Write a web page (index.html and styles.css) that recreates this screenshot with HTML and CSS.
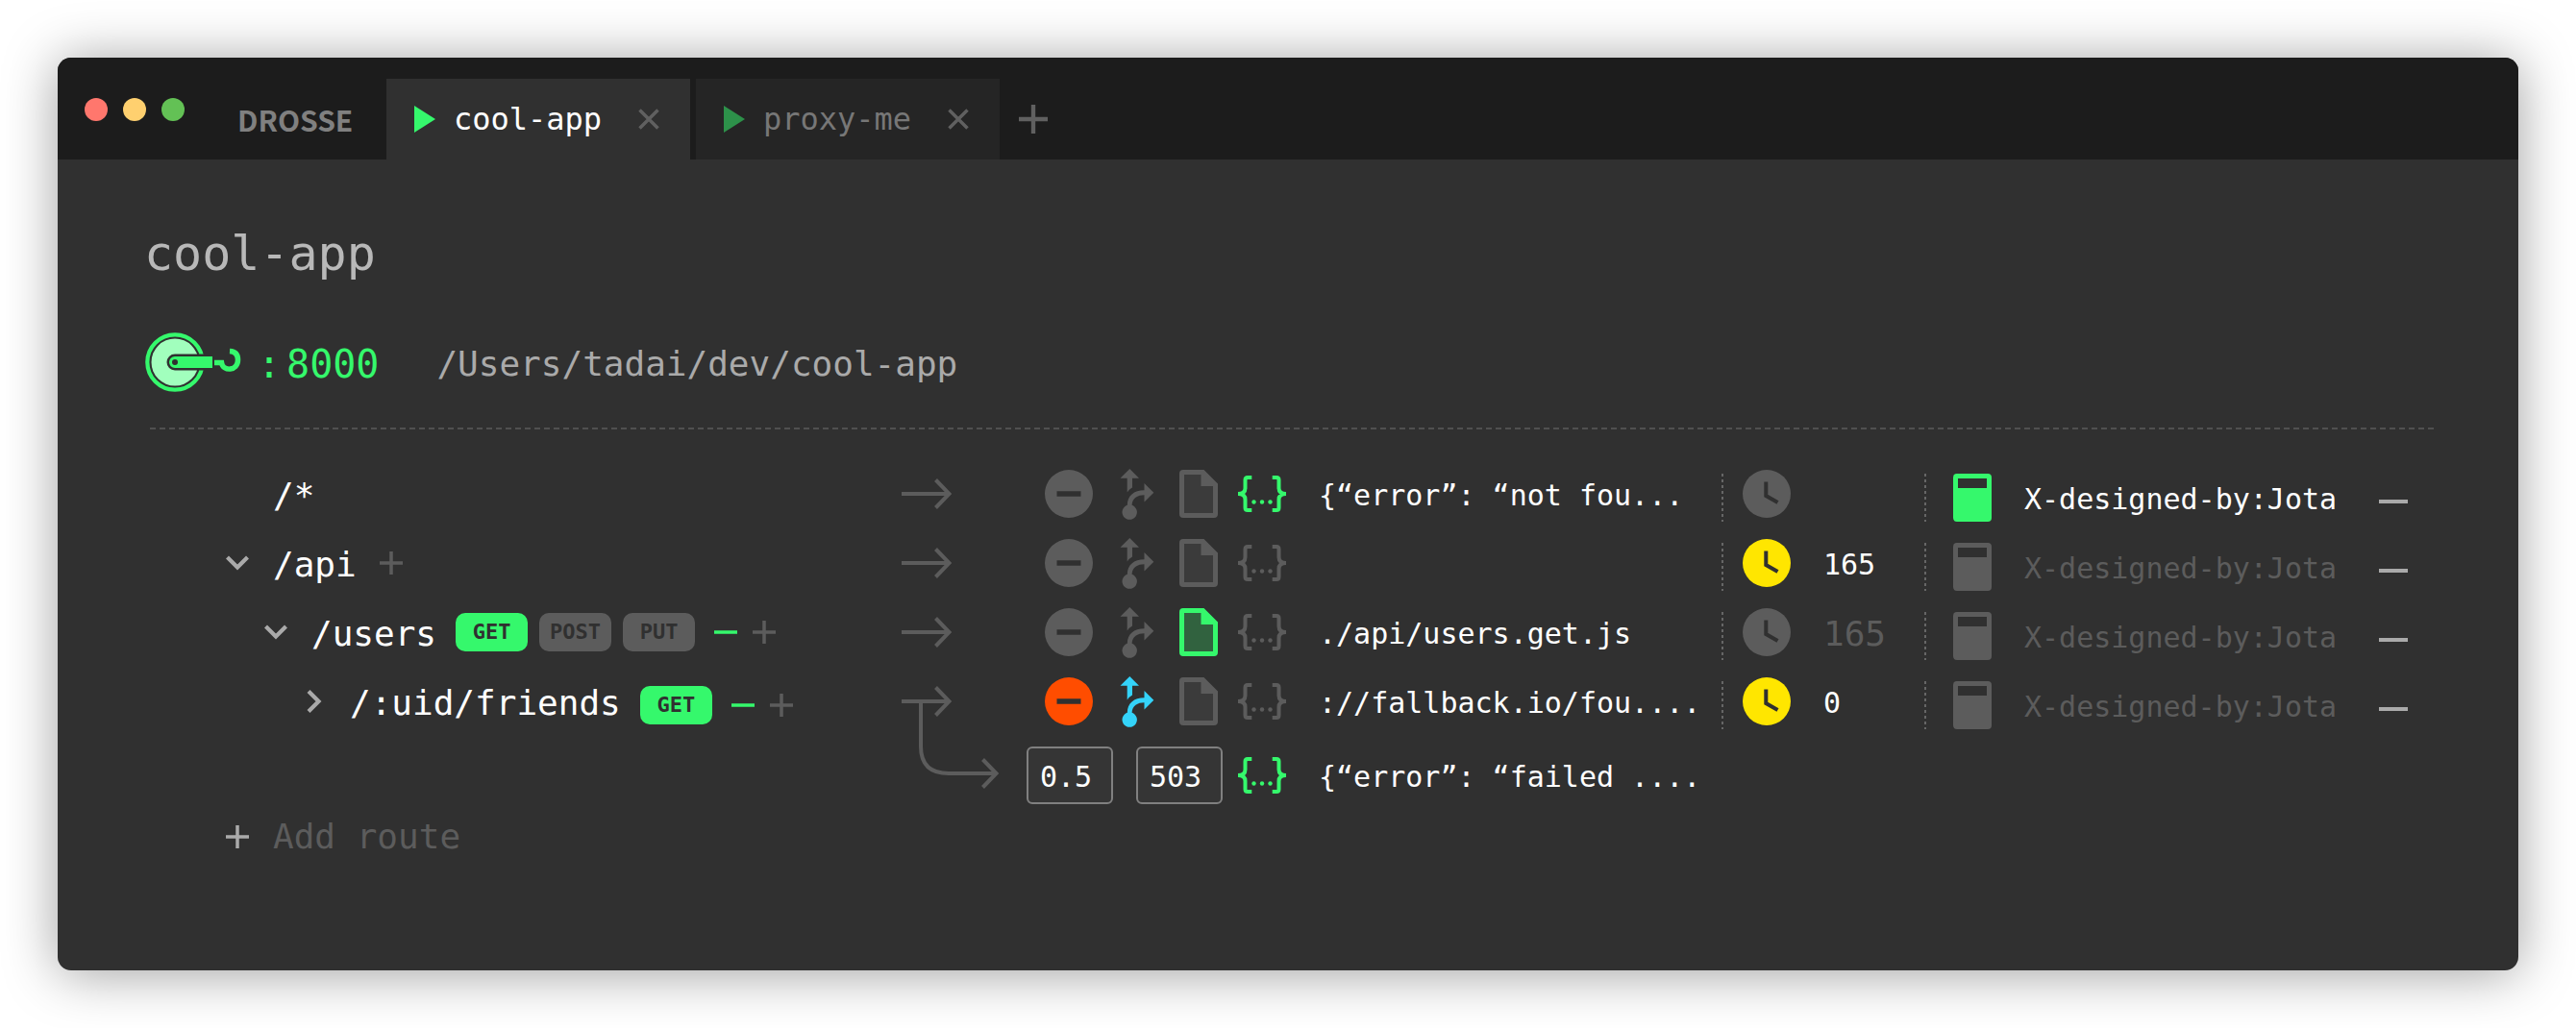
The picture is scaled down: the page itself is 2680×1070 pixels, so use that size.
FILE: index.html
```html
<!DOCTYPE html>
<html lang="en">
<head>
<meta charset="utf-8">
<title>Drosse</title>
<link rel="stylesheet" href="styles.css">
</head>
<body>
<svg class="sprite" aria-hidden="true">
  <symbol id="play" viewBox="0 0 22 28"><path d="M0 0L22 14L0 28Z"/></symbol>
  <symbol id="close" viewBox="0 0 22 22"><path d="M1.500 1.500L20.500 20.500M20.500 1.500L1.500 20.500" fill="none" stroke="currentColor" stroke-width="3.500"/></symbol>
  <symbol id="plus" viewBox="0 0 24 24"><path d="M12 0V24M0 12H24" fill="none" stroke="currentColor" stroke-width="3.500"/></symbol>
  <symbol id="minus" viewBox="0 0 24 24"><path d="M0 12H24" fill="none" stroke="currentColor" stroke-width="3.500"/></symbol>
  <symbol id="chevron" viewBox="0 0 24 24"><path d="M1.500 6L12 16.500L22.500 6" fill="none" stroke="currentColor" stroke-width="4.200"/></symbol>
  <symbol id="arrow" viewBox="0 0 52 32"><path d="M0 16H49M35.500 1.500L49.500 16L35.500 30.500" fill="none" stroke="currentColor" stroke-width="4"/></symbol>
  <symbol id="elbow" viewBox="0 0 102 96"><path d="M20 4V49Q20 77 49 77H98M84.500 62.500L98.500 77L84.500 91.500" fill="none" stroke="currentColor" stroke-width="4"/></symbol>
  <symbol id="block" viewBox="0 0 50 50"><path fill-rule="evenodd" d="M25 0A25 25 0 0 1 25 50A25 25 0 0 1 25 0ZM12.500 22.300V27.700H37.500V22.300Z"/></symbol>
  <symbol id="proxy" viewBox="0 0 36 54"><path d="M10.300 1L20 10.800H13V20.500Q9.500 22.500 7.700 25.500V10.800H.5Z"/><path d="M25.500 16L35.300 25.800L25.500 35.500V28.300C18.500 28.300 13 31.500 12.600 38.800A7.700 7.700 0 1 1 7.800 38.800C8 29 14.500 23.200 25.500 23.200Z"/></symbol>
  <symbol id="file" viewBox="0 0 40 50"><path d="M4 4H24V16H36V46H4Z" opacity=".25"/><path fill-rule="evenodd" d="M4 0H25.500L40 14.500V46A4 4 0 0 1 36 50H4A4 4 0 0 1 0 46V4A4 4 0 0 1 4 0ZM5 5V45H35V17H22.500V5Z"/></symbol>
  <symbol id="braces" viewBox="0 0 52 40"><path d="M15.300 3H11Q8.500 3 8.500 5.500V14Q8.500 20 1 20Q8.500 20 8.500 26V34.500Q8.500 37 11 37H15.300M36.700 3H41Q43.500 3 43.500 5.500V14Q43.500 20 51 20Q43.500 20 43.500 26V34.500Q43.500 37 41 37H36.700" fill="none" stroke="currentColor" stroke-width="4"/><path d="M1 18H5.500L8 20L5.500 22H1ZM51 18H46.500L44 20L46.500 22H51Z"/><circle cx="17.500" cy="28.500" r="2.200"/><circle cx="26" cy="28.500" r="2.200"/><circle cx="34.500" cy="28.500" r="2.200"/></symbol>
  <symbol id="clock" viewBox="0 0 50 50"><circle cx="25" cy="25" r="25"/><path d="M24.300 12.500V27L36.500 34" fill="none" stroke="#303030" stroke-width="4"/></symbol>
  <symbol id="header" viewBox="0 0 40 50"><path fill-rule="evenodd" d="M4 0H36A4 4 0 0 1 40 4V46A4 4 0 0 1 36 50H4A4 4 0 0 1 0 46V4A4 4 0 0 1 4 0ZM5 5V15H35V5Z"/></symbol>
  <symbol id="reel" viewBox="0 0 100 62">
    <circle cx="31" cy="31" r="28.700" fill="none" stroke="currentColor" stroke-width="4.200"/>
    <circle cx="31" cy="31" r="24.500" fill="#a1ffbd"/>
    <path d="M31 22.500H64V39.500H31A8.500 8.500 0 0 1 31 22.500Z" fill="#303030"/>
    <path fill-rule="evenodd" d="M31 25H70V37H31A6 6 0 0 1 31 25ZM31 28A3 3 0 0 0 31 34A3 3 0 0 0 31 28Z"/>
    <path d="M72 31.500H79.500C81 41 96.500 40.500 96.500 28.500Q96.500 20 88 19.500" fill="none" stroke="currentColor" stroke-width="5.500"/>
  </symbol>
</svg>

<main class="window">
  <header class="titlebar">
    <div class="lights"><button class="light red" aria-label="Close window"></button><button class="light amber" aria-label="Minimise"></button><button class="light green" aria-label="Zoom"></button></div>
    <div class="brand">DROSSE</div>
    <nav class="tabs">
      <div class="tab active"><svg class="play"><use href="#play"/></svg><a href="#cool-app">cool-app</a><button class="tab-close" aria-label="Close cool-app"><svg><use href="#close"/></svg></button></div>
      <div class="tab"><svg class="play"><use href="#play"/></svg><a href="#proxy-me">proxy-me</a><button class="tab-close" aria-label="Close proxy-me"><svg><use href="#close"/></svg></button></div>
    </nav>
    <button class="tab-add" aria-label="New tab"><svg><use href="#plus"/></svg></button>
  </header>

  <section class="content" id="cool-app">
    <h1>cool-app</h1>
    <div class="server">
      <svg class="reel"><use href="#reel"/></svg>
      <div class="port"><span>:</span><span>8000</span></div>
      <div class="folder">/Users/tadai/dev/cool-app</div>
    </div>

    <div class="routes">
      <div class="route">
        <div class="path"><span class="toggle"></span><span class="name">/*</span></div>
        <svg class="arrow"><use href="#arrow"/></svg>
        <div class="kinds">
          <button aria-label="Throttle"><svg class="i-block"><use href="#block"/></svg></button>
          <button aria-label="Proxy"><svg class="i-proxy"><use href="#proxy"/></svg></button>
          <button aria-label="File"><svg class="i-file"><use href="#file"/></svg></button>
          <button class="on" aria-label="Inline body"><svg class="i-braces"><use href="#braces"/></svg></button>
        </div>
        <div class="value">{“error”: “not fou...</div>
        <div class="delay"><i class="rule"></i><button aria-label="Delay"><svg class="i-clock"><use href="#clock"/></svg></button></div>
        <div class="head active"><i class="rule"></i><button aria-label="Headers"><svg class="i-header"><use href="#header"/></svg></button><span class="head-text">X-designed-by:Jota</span><button class="remove" aria-label="Remove header"></button></div>
      </div>

      <div class="route">
        <div class="path"><button class="toggle" aria-label="Collapse"><svg><use href="#chevron"/></svg></button><span class="name">/api</span><button class="add" aria-label="Add child"><svg><use href="#plus"/></svg></button></div>
        <svg class="arrow"><use href="#arrow"/></svg>
        <div class="kinds">
          <button aria-label="Throttle"><svg class="i-block"><use href="#block"/></svg></button>
          <button aria-label="Proxy"><svg class="i-proxy"><use href="#proxy"/></svg></button>
          <button aria-label="File"><svg class="i-file"><use href="#file"/></svg></button>
          <button aria-label="Inline body"><svg class="i-braces"><use href="#braces"/></svg></button>
        </div>
        <div class="value"></div>
        <div class="delay"><i class="rule"></i><button class="yellow" aria-label="Delay"><svg class="i-clock"><use href="#clock"/></svg></button><span class="ms">165</span></div>
        <div class="head"><i class="rule"></i><button aria-label="Headers"><svg class="i-header"><use href="#header"/></svg></button><span class="head-text">X-designed-by:Jota</span><button class="remove" aria-label="Remove header"></button></div>
      </div>

      <div class="route">
        <div class="path level-1"><button class="toggle" aria-label="Collapse"><svg><use href="#chevron"/></svg></button><span class="name">/users</span>
          <div class="verbs"><button class="verb on">GET</button><button class="verb">POST</button><button class="verb">PUT</button></div>
          <div class="edit"><button class="on" aria-label="Remove verb"><svg><use href="#minus"/></svg></button><button aria-label="Add verb"><svg><use href="#plus"/></svg></button></div></div>
        <svg class="arrow"><use href="#arrow"/></svg>
        <div class="kinds">
          <button aria-label="Throttle"><svg class="i-block"><use href="#block"/></svg></button>
          <button aria-label="Proxy"><svg class="i-proxy"><use href="#proxy"/></svg></button>
          <button class="on" aria-label="File"><svg class="i-file"><use href="#file"/></svg></button>
          <button aria-label="Inline body"><svg class="i-braces"><use href="#braces"/></svg></button>
        </div>
        <div class="value">./api/users.get.js</div>
        <div class="delay"><i class="rule"></i><button aria-label="Delay"><svg class="i-clock"><use href="#clock"/></svg></button><span class="ms off">165</span></div>
        <div class="head"><i class="rule"></i><button aria-label="Headers"><svg class="i-header"><use href="#header"/></svg></button><span class="head-text">X-designed-by:Jota</span><button class="remove" aria-label="Remove header"></button></div>
      </div>

      <div class="route">
        <div class="path level-2"><button class="toggle closed" aria-label="Expand"><svg><use href="#chevron"/></svg></button><span class="name">/:uid/friends</span>
          <div class="verbs"><button class="verb on">GET</button></div>
          <div class="edit"><button class="on" aria-label="Remove verb"><svg><use href="#minus"/></svg></button><button aria-label="Add verb"><svg><use href="#plus"/></svg></button></div></div>
        <svg class="arrow"><use href="#arrow"/></svg>
        <div class="kinds">
          <button class="orange" aria-label="Throttle"><svg class="i-block"><use href="#block"/></svg></button>
          <button class="blue" aria-label="Proxy"><svg class="i-proxy"><use href="#proxy"/></svg></button>
          <button aria-label="File"><svg class="i-file"><use href="#file"/></svg></button>
          <button aria-label="Inline body"><svg class="i-braces"><use href="#braces"/></svg></button>
        </div>
        <div class="value">://fallback.io/fou....</div>
        <div class="delay"><i class="rule"></i><button class="yellow" aria-label="Delay"><svg class="i-clock"><use href="#clock"/></svg></button><span class="ms">0</span></div>
        <div class="head"><i class="rule"></i><button aria-label="Headers"><svg class="i-header"><use href="#header"/></svg></button><span class="head-text">X-designed-by:Jota</span><button class="remove" aria-label="Remove header"></button></div>
      </div>

      <div class="route fallback">
        <div class="path"></div>
        <svg class="elbow"><use href="#elbow"/></svg>
        <div class="failure">
          <input type="text" value="0.5" aria-label="Failure rate">
          <input type="text" value="503" aria-label="Failure status">
          <button class="on" aria-label="Inline body"><svg class="i-braces"><use href="#braces"/></svg></button>
        </div>
        <div class="value">{“error”: “failed ....</div>
      </div>
    </div>

    <button class="add-route"><svg><use href="#plus"/></svg><span>Add route</span></button>
  </section>
</main>
</body>
</html>
```
FILE: styles.css
```css
* { box-sizing: border-box; }

body {
  margin: 0;
  padding: 60px;
  min-height: 100vh;
  display: flex;
  background: #fff;
  color: #fff;
  font-family: "DejaVu Sans Mono", monospace;
  font-size: 30px;
  line-height: 36px;
}

svg { display: block; fill: currentColor; flex: none; }
.sprite { position: absolute; width: 0; height: 0; }

button {
  display: flex;
  align-items: center;
  justify-content: center;
  padding: 0;
  border: 0;
  background: none;
  color: inherit;
  font: inherit;
  cursor: pointer;
}

a { color: inherit; text-decoration: none; }

.window {
  flex: 1;
  background: #303030;
  border-radius: 14px;
  overflow: hidden;
  box-shadow: 0 3px 56px rgba(0, 0, 0, .38);
}

/* Title bar */
.titlebar {
  display: flex;
  align-items: flex-end;
  height: 106px;
  padding-left: 28px;
  background: #1c1c1c;
}
.lights { display: flex; gap: 16px; padding-bottom: 40px; }
.light { width: 24px; height: 24px; border-radius: 50%; }
.red { background: #ff776d; }
.amber { background: #ffd06f; }
.green { background: #63c155; }

.brand {
  width: 210px;
  padding-left: 55px;
  color: #808080;
  font-family: "Noto Sans CJK SC", sans-serif;
  font-size: 30px;
  font-weight: 700;
  line-height: 84px;
}

.tabs { display: flex; gap: 6px; }
.tab {
  display: flex;
  align-items: center;
  width: 316px;
  height: 84px;
  padding-left: 29px;
  background: #252525;
  color: #777;
  font-size: 32px;
}
.tab.active { background: #303030; color: #fff; }
.play { width: 22px; height: 28px; margin-right: 19px; color: #2d914a; }
.active .play { color: #35f86c; }
.tab-close { margin-left: auto; margin-right: 32px; color: #606060; }
.tab-close svg { width: 22px; height: 22px; }
.tab-add { height: 84px; margin-left: 20px; color: #606060; }
.tab-add svg { width: 30px; height: 30px; }

/* Application */
.content { padding: 68px 84px 60px 90px; }

h1 {
  margin: 0;
  color: #b8b8b8;
  font-size: 50px;
  font-weight: 400;
  line-height: 60px;
}

.server {
  display: flex;
  align-items: center;
  margin-top: 52px;
  color: #35f86c;
}
.reel { width: 100px; height: 62px; margin-left: 1px; }
.port { display: flex; gap: 6px; padding-top: 4px; margin-left: 17px; font-size: 40px; }
.folder { margin-left: 60px; padding-top: 3px; color: #aaa; font-size: 36px; }

.routes {
  margin-top: 37px;
  padding-top: 33px;
  background: repeating-linear-gradient(90deg, #505050 0 6px, transparent 6px 10px) 6px 0 / 100% 2px no-repeat;
}

.route {
  display: grid;
  grid-template-columns: 788fr 130fr 304fr 419fr 211fr 534fr;
  grid-template-rows: 72px;
  align-items: center;
  color: #5c5c5c;
}
.route > * { min-width: 0; }

.path { display: flex; align-items: center; color: #fff; }
.level-1 { padding-left: 40px; }
.level-2 { padding-left: 80px; }
.toggle { width: 24px; height: 24px; margin: 0 25px 0 85px; color: #aaa; }
.toggle svg, .add svg, .edit svg { width: 24px; height: 24px; }
.closed svg { transform: rotate(-90deg); }
.name { padding-top: 3px; font-size: 36px; white-space: nowrap; }
.add { margin-left: 24px; color: #5c5c5c; }

.verbs { display: flex; gap: 12px; margin-left: 20px; }
.verb {
  width: 75px;
  height: 40px;
  border-radius: 10px;
  background: #5c5c5c;
  color: #303030;
  font-size: 22px;
  font-weight: 700;
}
.verb.on { background: #35f86c; color: #303030; }
.edit { display: flex; gap: 16px; margin-left: 20px; color: #5c5c5c; }
.level-2 .verbs, .level-2 .edit { padding-top: 8px; }

.on { color: #35f86c; }
.orange { color: #ff4d00; }
.blue { color: #34d3f9; }
.yellow { color: #ffe600; }

.arrow { width: 52px; height: 32px; }
.elbow { width: 102px; height: 96px; align-self: end; margin-bottom: 24px; }

.kinds { display: grid; grid-template-columns: 78px 64px 64px 68px; padding-left: 5px; }
.i-block, .i-clock { width: 50px; height: 50px; }
.i-proxy { width: 36px; height: 54px; }
.i-file, .i-header { width: 40px; height: 50px; }
.i-braces { width: 52px; height: 40px; }

.value { padding-top: 3px; color: #fff; white-space: pre; }

.rule {
  width: 2px;
  height: 50px;
  background: repeating-linear-gradient(#666 0 3px, transparent 3px 6px);
}
.delay, .head { display: flex; align-items: center; padding-top: 8px; }
.delay button { margin: -8px 34px 0 20px; }
.ms { margin-top: -5px; color: #fff; }
.ms.off { color: #5c5c5c; font-size: 36px; }
.head button:first-of-type { margin: 0 34px 0 28px; }
.head-text { padding-top: 3px; }
.head.active button:first-of-type { color: #35f86c; }
.head.active .head-text { color: #fff; }
.remove { width: 30px; height: 4px; margin: 8px 0 0 44px; background: #aaa; }

/* Fallback response of the route above */
.fallback { grid-template-rows: 82px; }
.failure { display: flex; align-items: center; gap: 24px; }
.failure input {
  width: 90px;
  height: 60px;
  padding: 3px 0 0 12px;
  border: 2px solid #808080;
  border-radius: 6px;
  background: #353535;
  color: #fff;
  font: inherit;
}
.failure button { margin-left: -9px; }

.add-route { margin: 2px 0 0 85px; height: 42px; color: #aaa; font-size: 36px; }
.add-route svg { width: 24px; height: 24px; margin-right: 25px; }
.add-route span { color: #5c5c5c; }
```
